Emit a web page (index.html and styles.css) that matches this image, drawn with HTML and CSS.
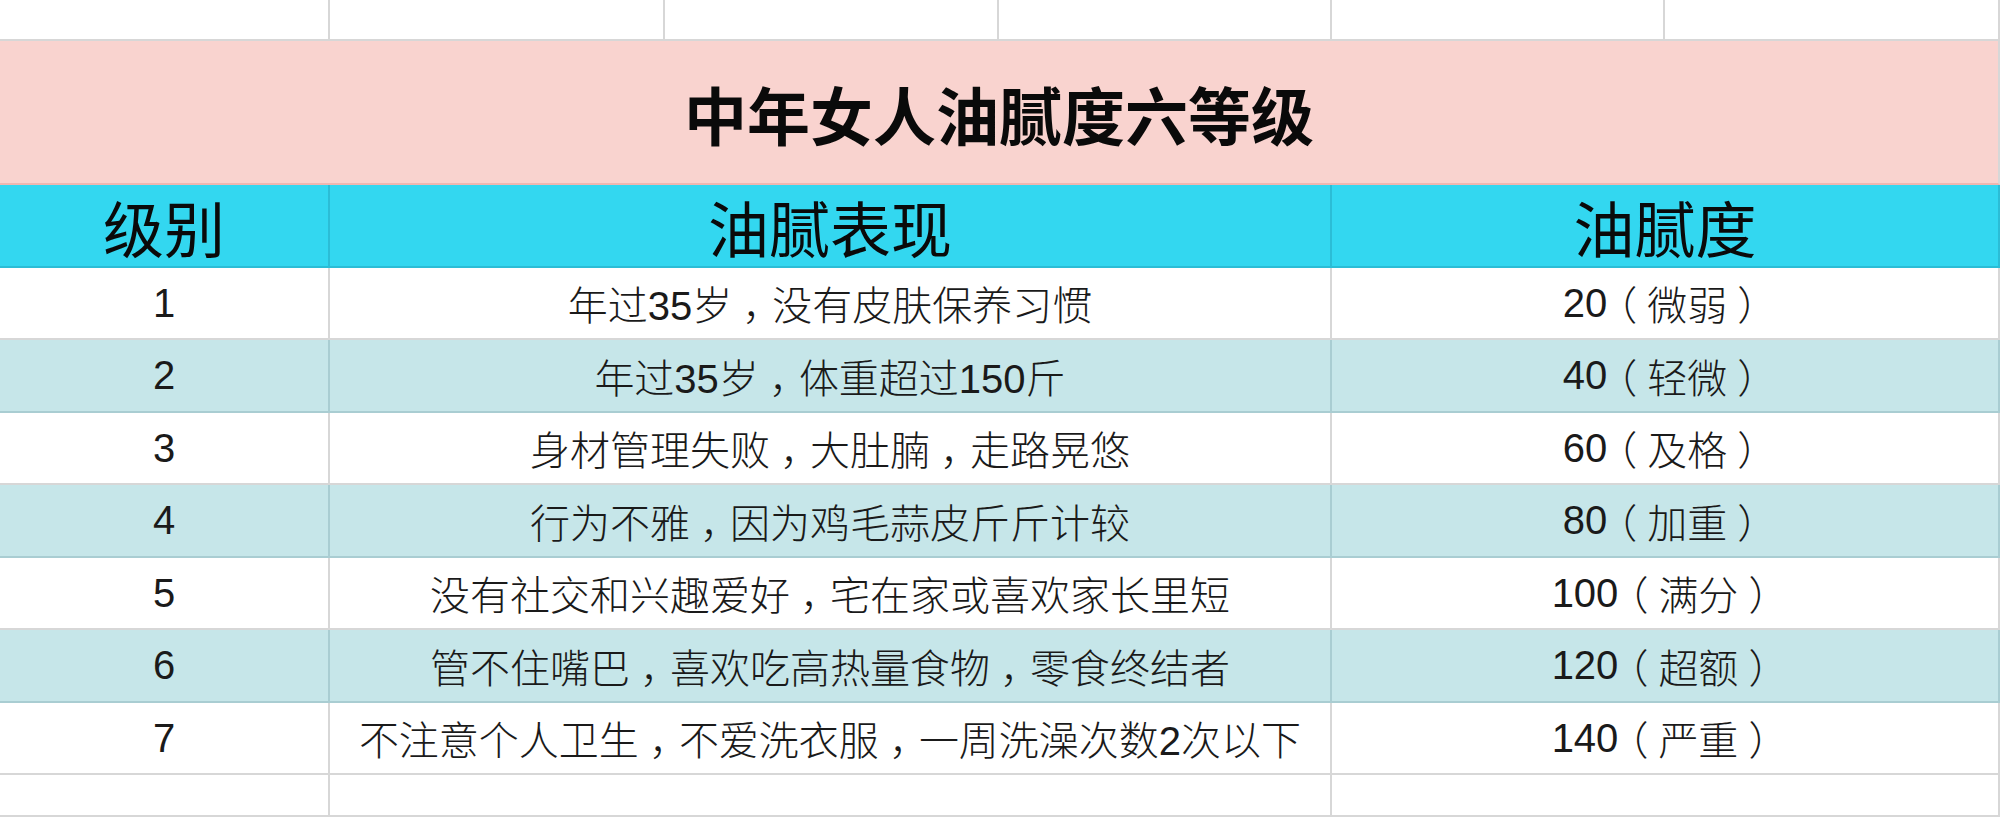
FILE: index.html
```html
<!DOCTYPE html>
<html lang="zh-CN">
<head>
<meta charset="utf-8">
<title>中年女人油腻度六等级</title>
<link rel="stylesheet" href="styles.css">
</head>
<body>
<div class="sheet">
  <div class="cell blank"></div>
  <div class="cell blank"></div>
  <div class="cell blank"></div>
  <div class="cell blank"></div>
  <div class="cell blank"></div>
  <div class="cell blank"></div>

  <div class="cell title span6">中年女人油腻度六等级</div>

  <div class="cell head">级别</div>
  <div class="cell head span3">油腻表现</div>
  <div class="cell head span2">油腻度</div>

  <div class="cell data">1</div>
  <div class="cell data span3">年过35岁<span class="p">，</span>没有皮肤保养习惯</div>
  <div class="cell data span2">20<span class="p">（</span>微弱<span class="p">）</span></div>

  <div class="cell data alt">2</div>
  <div class="cell data alt span3">年过35岁<span class="p">，</span>体重超过150斤</div>
  <div class="cell data alt span2">40<span class="p">（</span>轻微<span class="p">）</span></div>

  <div class="cell data">3</div>
  <div class="cell data span3">身材管理失败<span class="p">，</span>大肚腩<span class="p">，</span>走路晃悠</div>
  <div class="cell data span2">60<span class="p">（</span>及格<span class="p">）</span></div>

  <div class="cell data alt">4</div>
  <div class="cell data alt span3">行为不雅<span class="p">，</span>因为鸡毛蒜皮斤斤计较</div>
  <div class="cell data alt span2">80<span class="p">（</span>加重<span class="p">）</span></div>

  <div class="cell data">5</div>
  <div class="cell data span3">没有社交和兴趣爱好<span class="p">，</span>宅在家或喜欢家长里短</div>
  <div class="cell data span2">100<span class="p">（</span>满分<span class="p">）</span></div>

  <div class="cell data alt">6</div>
  <div class="cell data alt span3">管不住嘴巴<span class="p">，</span>喜欢吃高热量食物<span class="p">，</span>零食终结者</div>
  <div class="cell data alt span2">120<span class="p">（</span>超额<span class="p">）</span></div>

  <div class="cell data">7</div>
  <div class="cell data span3">不注意个人卫生<span class="p">，</span>不爱洗衣服<span class="p">，</span>一周洗澡次数2次以下</div>
  <div class="cell data span2">140<span class="p">（</span>严重<span class="p">）</span></div>

  <div class="cell blank"></div>
  <div class="cell blank span3"></div>
  <div class="cell blank span2"></div>
</div>
</body>
</html>
```

FILE: styles.css
```css
* { box-sizing: border-box; }
html, body {
  margin: 0;
  padding: 0;
  background: #ffffff;
}
body {
  width: 2000px;
  height: 817px;
  overflow: hidden;
  font-family: "Liberation Sans", "Noto Sans CJK SC", sans-serif;
  color: #111111;
}
.sheet {
  display: grid;
  grid-template-columns: 330px 335px 334px 333px 333px 335px;
  grid-template-rows: 41px 144px 83px 72px 73px 72px 73px 72px 73px 72px 42px;
}
.cell {
  border-right: 2px solid #d7d7d7;
  border-bottom: 2px solid #d7d7d7;
  display: flex;
  align-items: center;
  justify-content: center;
  white-space: nowrap;
}
.span2 { grid-column: span 2; }
.span3 { grid-column: span 3; }
.span6 { grid-column: span 6; }

.title {
  background: #f9d3cf;
  border-bottom-color: #eeb7b1;
  font-family: "Noto Sans CJK SC", sans-serif;
  font-weight: 700;
  font-size: 63px;
  color: #0a0a0a;
}
.head {
  background: #33d7f0;
  border-right-color: #2bbdd6;
  border-bottom-color: #2bbdd6;
  font-family: "Noto Sans CJK SC", sans-serif;
  font-weight: 400;
  font-size: 61px;
  color: #0a0a0a;
  padding-top: 2px;
}
.data {
  font-size: 40px;
  font-weight: 300;
  color: #1a1a1a;
  font-family: "Liberation Sans", "Noto Sans CJK SC", sans-serif;
}
.p {
  font-family: "Noto Sans CJK SC", sans-serif;
  font-feature-settings: "halt";
  padding: 0 0.25em;
}
.alt {
  background: #c6e6e9;
  border-right-color: #a9cdd2;
  border-bottom-color: #a9cdd2;
}
```
